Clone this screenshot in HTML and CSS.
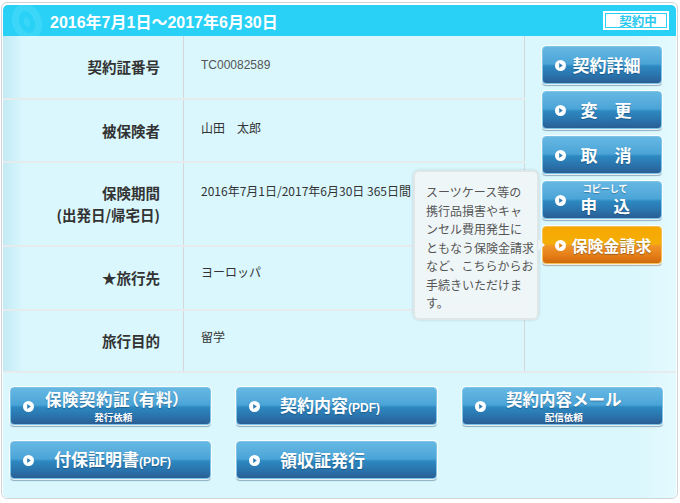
FILE: index.html
```html
<!DOCTYPE html>
<html lang="ja">
<head>
<meta charset="utf-8">
<link rel="stylesheet" href="styles.css">
</head>
<body>
<div class="card">
  <div class="hdr">
    <svg class="hdr-ico" width="40" height="31" viewBox="0 0 40 31">
      <ellipse cx="20" cy="17" rx="11" ry="15" transform="rotate(-20 20 17)" fill="none" stroke="#44d9f9" stroke-width="7" opacity="0.7"/>
      <ellipse cx="20" cy="17" rx="3" ry="5" transform="rotate(-20 20 17)" fill="#44d9f9" opacity="0.6"/>
    </svg>
    <span class="hdr-title">2016年7月1日～2017年6月30日</span>
    <span class="badge">契約中</span>
  </div>
  <div class="body">
    <div class="main">
      <div class="tbl">
        <div class="row r1"><div class="lbl">契約証番号</div><div class="val num">TC00082589</div></div>
        <div class="row r2"><div class="lbl">被保険者</div><div class="val">山田　太郎</div></div>
        <div class="row r3"><div class="lbl">保険期間<br>(出発日/帰宅日)</div><div class="val">2016年7月1日/2017年6月30日 365日間</div></div>
        <div class="row r4"><div class="lbl">★旅行先</div><div class="val">ヨーロッパ</div></div>
        <div class="row r5"><div class="lbl">旅行目的</div><div class="val">留学</div></div>
      </div>
      <div class="side">
        <a class="btn sbtn"><svg class="ico" width="11" height="11" viewBox="0 0 11 11"><circle cx="5.5" cy="5.5" r="5.5" fill="#fff"/><path d="M4.2 3 L7.8 5.5 L4.2 8 Z" fill="#2e7db5"/></svg><span class="t">契約詳細</span></a>
        <a class="btn sbtn"><svg class="ico" width="11" height="11" viewBox="0 0 11 11"><circle cx="5.5" cy="5.5" r="5.5" fill="#fff"/><path d="M4.2 3 L7.8 5.5 L4.2 8 Z" fill="#2e7db5"/></svg><span class="t sp">変　更</span></a>
        <a class="btn sbtn"><svg class="ico" width="11" height="11" viewBox="0 0 11 11"><circle cx="5.5" cy="5.5" r="5.5" fill="#fff"/><path d="M4.2 3 L7.8 5.5 L4.2 8 Z" fill="#2e7db5"/></svg><span class="t sp">取　消</span></a>
        <a class="btn sbtn"><svg class="ico" width="11" height="11" viewBox="0 0 11 11"><circle cx="5.5" cy="5.5" r="5.5" fill="#fff"/><path d="M4.2 3 L7.8 5.5 L4.2 8 Z" fill="#2e7db5"/></svg><span class="t sp two"><span class="sm">コピーして</span><span class="mn">申　込</span></span></a>
        <a class="btn sbtn orange"><svg class="ico" width="11" height="11" viewBox="0 0 11 11"><circle cx="5.5" cy="5.5" r="5.5" fill="#fff"/><path d="M4.2 3 L7.8 5.5 L4.2 8 Z" fill="#e58410"/></svg><span class="t o">保険金請求</span></a>
      </div>
    </div>
    <div class="bottom">
      <a class="btn bbtn"><svg class="ico" width="11" height="11" viewBox="0 0 11 11"><circle cx="5.5" cy="5.5" r="5.5" fill="#fff"/><path d="M4.2 3 L7.8 5.5 L4.2 8 Z" fill="#2e7db5"/></svg><span class="t two first"><span class="mn palt">保険契約証（有料）</span><span class="sub">発行依頼</span></span></a>
      <a class="btn bbtn"><svg class="ico" width="11" height="11" viewBox="0 0 11 11"><circle cx="5.5" cy="5.5" r="5.5" fill="#fff"/><path d="M4.2 3 L7.8 5.5 L4.2 8 Z" fill="#2e7db5"/></svg><span class="t">契約内容<span class="pdf">(PDF)</span></span></a>
      <a class="btn bbtn"><svg class="ico" width="11" height="11" viewBox="0 0 11 11"><circle cx="5.5" cy="5.5" r="5.5" fill="#fff"/><path d="M4.2 3 L7.8 5.5 L4.2 8 Z" fill="#2e7db5"/></svg><span class="t two"><span class="mn">契約内容メール</span><span class="sub">配信依頼</span></span></a>
      <a class="btn bbtn"><svg class="ico" width="11" height="11" viewBox="0 0 11 11"><circle cx="5.5" cy="5.5" r="5.5" fill="#fff"/><path d="M4.2 3 L7.8 5.5 L4.2 8 Z" fill="#2e7db5"/></svg><span class="t">付保証明書<span class="pdf">(PDF)</span></span></a>
      <a class="btn bbtn"><svg class="ico" width="11" height="11" viewBox="0 0 11 11"><circle cx="5.5" cy="5.5" r="5.5" fill="#fff"/><path d="M4.2 3 L7.8 5.5 L4.2 8 Z" fill="#2e7db5"/></svg><span class="t">領収証発行</span></a>
    </div>
  </div>
  <div class="tip">スーツケース等の<br>携行品損害やキャ<br>ンセル費用発生に<br>ともなう保険金請求<br>など、こちらからお<br>手続きいただけま<br>す。</div>
</div>
</body>
</html>
```
FILE: styles.css
```css
* { box-sizing: border-box; }
body {
  margin: 0;
  background: #fff;
  font-family: "Liberation Sans", "Noto Sans CJK JP", sans-serif;
  color: #333;
}
.card {
  position: relative;
  margin: 2px 0 0 1px;
  width: 677px;
  height: 497px;
  border: 1px solid #cfd5d7;
  border-radius: 6px;
  padding: 2px 1px 0 1px;
  background: #fff;
}
.hdr {
  height: 31px;
  background: #2ad1f6;
  border-radius: 5px 5px 0 0;
  display: flex;
  align-items: center;
  position: relative;
}
.hdr-ico { position: absolute; left: 4px; top: 0; }
.hdr-title {
  margin-left: 47px;
  color: #fff;
  font-weight: bold;
  font-size: 16px;
  position: relative;
}
.badge {
  margin-left: auto;
  margin-right: 7px;
  width: 66px;
  height: 19px;
  background: #fff;
  border: 1px solid #fff;
  outline: 1px solid #2ad1f6;
  outline-offset: -3px;
  color: #2bc8ee;
  font-family: "Noto Sans CJK JP", sans-serif;
  font-weight: bold;
  font-size: 12.5px;
  line-height: 17px;
  display: flex;
  align-items: center;
  justify-content: center;
  padding-left: 4px;
}
.body {
  height: 462px;
  background: linear-gradient(to right, #d9f7fd 0, #d9f7fd 93%, #e4fafe 100%);
  border-radius: 0 0 5px 5px;
}
.main {
  display: flex;
  height: 337px;
  border-bottom: 2px solid #e6ecee;
}
.tbl { width: 524px; }
.row {
  display: flex;
  border-bottom: 2px solid #e6ecee;
}
.r1 { height: 64px; }
.r2 { height: 63px; }
.r3 { height: 84px; }
.r4 { height: 64px; }
.r5 { height: 60px; border-bottom: none; }
.lbl {
  width: 181px;
  flex: none;
  border-right: 1px solid #d3d9db;
  background: linear-gradient(to right, #c3eaf4 0, #d9f7fd 20px);
  display: flex;
  align-items: center;
  justify-content: flex-end;
  text-align: right;
  padding-right: 23px;
  font-family: "Noto Sans CJK JP", sans-serif;
  font-weight: bold;
  font-size: 14.5px;
  line-height: 22px;
  color: #333;
}
.val {
  flex: 1;
  padding: 21px 0 0 17px;
  font-family: "Noto Sans CJK JP", sans-serif;
  font-size: 12px;
  line-height: 14px;
  color: #333;
  border-right: 1px solid #d3d9db;
  white-space: nowrap;
}
.r1 .val { padding-top: 22px; }
.r2 .val { padding-top: 21px; }
.r3 .val { padding-top: 21px; }
.r4 .val { padding-top: 18px; }
.r5 .val { padding-top: 19px; }
.val.num { font-family: "Liberation Sans", sans-serif; color: #555; }
.side {
  width: 151px;
  padding: 10px 0 0 17px;
  display: flex;
  flex-direction: column;
  gap: 7px;
}
.btn {
  display: flex;
  align-items: center;
  height: 38px;
  border-radius: 4px;
  border: 1px solid #7cc3e6;
  background: linear-gradient(#66b8e3 0%, #4ba4d7 47%, #2d89c1 53%, #2a72ab 80%, #2a5e94 100%);
  box-shadow: 0 0 0 1px rgba(255,255,255,0.8), 0 2px 1px rgba(0,40,80,0.35);
  color: #fff;
  font-family: "Noto Sans CJK JP", sans-serif;
  font-weight: bold;
  text-shadow: 0 1px 1px rgba(0,30,60,0.35);
  text-decoration: none;
  position: relative;
}
.btn .ico { margin-left: 12px; flex: none; }
.sbtn { width: 120px; }
.sbtn .t { margin-left: 6px; font-size: 17px; line-height: 20px; }
.sbtn .t.sp { margin-left: 14px; }
.sbtn .t.o { margin-left: 5px; font-size: 16px; }
.orange {
  border-color: #f5bf55;
  background: linear-gradient(#f6a800 0%, #f5ae08 47%, #f09428 53%, #e57d16 80%, #cf6a0c 100%);
  box-shadow: 0 0 0 1px rgba(255,255,255,0.8), 0 2px 1px rgba(90,40,0,0.35);
}
.two { display: flex; flex-direction: column; align-items: center; }
.sbtn .two .sm { font-size: 9px; line-height: 13px; margin-top: -1px; }
.sbtn .two .mn { font-size: 16.5px; line-height: 24px; margin-top: -1px; }
.bottom {
  display: flex;
  flex-wrap: wrap;
  gap: 16px 25px;
  padding: 14px 0 0 7px;
}
.bbtn { width: 201px; }
.bbtn .t { margin-left: 20px; font-size: 17px; line-height: 20px; }
.bbtn .t.first { margin-left: 11px; }
.bbtn .two .mn { font-size: 16.5px; line-height: 24px; margin-top: -2px; }
.bbtn .two .sub { font-size: 9.5px; line-height: 14px; margin-top: -1px; }
.palt { font-feature-settings: "palt"; letter-spacing: 0.5px; }
.pdf { font-family: "Liberation Sans", sans-serif; font-size: 12px; }
.tip {
  position: absolute;
  left: 411px;
  top: 167px;
  width: 126px;
  height: 150px;
  background: rgba(239,246,248,0.97);
  border: 2px solid #dfe6e8;
  border-radius: 6px;
  box-shadow: 0 0 3px rgba(0,0,0,0.15);
  padding: 11px 0 0 11px;
  font-family: "Noto Sans CJK JP", sans-serif;
  font-size: 12px;
  line-height: 18.5px;
  color: #555;
  white-space: nowrap;
}
.tip::after {
  content: "";
  position: absolute;
  right: -8px;
  top: 67px;
  border-style: solid;
  border-width: 6px 0 6px 7px;
  border-color: transparent transparent transparent #eef5f7;
}
```
